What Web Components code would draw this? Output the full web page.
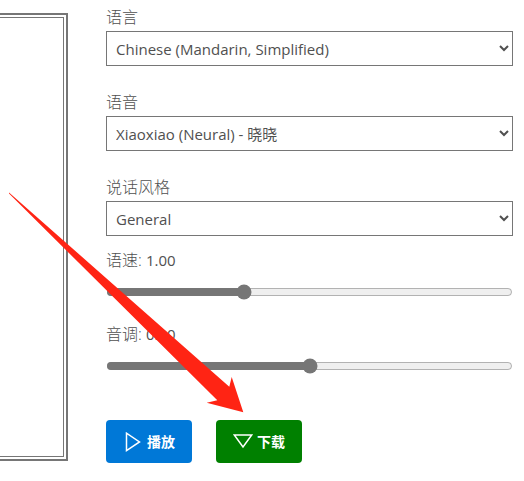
<!DOCTYPE html>
<html lang="zh-CN">
<head>
<meta charset="utf-8">
<title>语音</title>
<style>
    body {
        margin: 0;
        background: #fff;
        color: #505050;
        font-family: "Open Sans", "Noto Sans CJK SC", sans-serif;
        font-size: 16px;
        line-height: 24px;
    }
</style>
</head>
<body>
<speech-page>
    <text-editor slot="editor"></text-editor>
    <select-field label="语言" options="Chinese (Mandarin, Simplified)"></select-field>
    <select-field label="语音" options="Xiaoxiao (Neural) - 晓晓"></select-field>
    <select-field label="说话风格" options="General"></select-field>
    <range-field label="语速" min="0" max="3" value="1"></range-field>
    <range-field label="音调" min="-1" max="1" value="0"></range-field>
    <action-button slot="actions">
        <svg slot="icon" width="20" height="20" viewBox="0 0 20 20" fill="none" stroke="currentColor" stroke-width="1.5"><path d="M3.5 1.2v17.4l13-8.7z"/></svg>
        播放
    </action-button>
    <action-button slot="actions" kind="download">
        <svg slot="icon" width="20" height="20" viewBox="0 0 20 20" fill="none" stroke="currentColor" stroke-width="1.5"><path d="M1.3 3h17.4L10 15z"/></svg>
        下载
    </action-button>
    <pointer-arrow slot="overlay"></pointer-arrow>
</speech-page>

<template id="speech_page_tpl">
    <style>
        :host {
            display: grid;
            grid-template-columns: 68px minmax(0, 1fr);
            column-gap: 38px;
            padding: 5px 11px 0 0;
            position: relative;
        }
        .actions {
            display: flex;
            gap: 24px;
            margin-top: 46px;
        }
    </style>
    <slot name="editor"></slot>
    <div>
        <slot></slot>
        <div class="actions"><slot name="actions"></slot></div>
    </div>
    <slot name="overlay"></slot>
</template>

<template id="text_editor_tpl">
    <style>
        :host {
            display: flex;
            box-sizing: border-box;
            margin: 8px 0 2px;
            padding: 2px 2px 2px 0;
            border: 2px solid #767676;
            border-left: 0;
        }
        textarea {
            flex: 1;
            min-width: 0;
            box-sizing: border-box;
            margin: 0;
            border: 1px solid #767676;
            border-left: 0;
            resize: none;
            outline: none;
            font: inherit;
            color: inherit;
        }
    </style>
    <textarea aria-label="文本"></textarea>
</template>

<template id="select_field_tpl">
    <style>
        :host {
            display: block;
            margin-bottom: 24px;
        }
        :host(:nth-of-type(3)) {
            margin-bottom: 12px;
        }
        label {
            display: block;
            margin-bottom: 2px;
            font-weight: 300;
        }
        select {
            display: block;
            box-sizing: border-box;
            width: 100%;
            height: 35px;
            margin: 0;
            padding: 0 5px;
            border: 1px solid #767676;
            border-radius: 0;
            background: #fff;
            color: inherit;
            font: inherit;
            font-size: 15px;
        }
    </style>
    <label for="control"></label>
    <select id="control"></select>
</template>

<template id="range_field_tpl">
    <style>
        :host {
            display: block;
        }
        :host(:not(:last-of-type)) {
            margin-bottom: 22px;
        }
        label {
            display: block;
            margin-bottom: 12px;
            font-weight: 300;
        }
        output {
            font-size: 15px;
            font-weight: 400;
        }
        input {
            display: block;
            width: 100%;
            height: 16px;
            margin: 0;
            accent-color: #767676;
        }
    </style>
    <label for="control"><span></span>: <output></output></label>
    <input id="control" type="range" step="0.01">
</template>

<template id="action_button_tpl">
    <style>
        :host {
            display: block;
        }
        button {
            display: flex;
            align-items: center;
            gap: 4px;
            height: 43px;
            padding: 0 17px;
            border: 0;
            border-radius: 4px;
            background: #0078d7;
            color: #fff;
            font: inherit;
            font-size: 14px;
            font-weight: 700;
        }
        :host([kind="download"]) button {
            background: #008000;
        }
    </style>
    <button type="button"><slot name="icon"></slot><span><slot></slot></span></button>
</template>

<template id="pointer_arrow_tpl">
    <style>
        :host {
            position: absolute;
            top: 0;
            left: 0;
            pointer-events: none;
        }
        svg {
            display: block;
        }
    </style>
    <svg width="244" height="413" viewBox="0 0 244 413" aria-hidden="true">
        <path fill="#ff2414" d="M9 192.5L229.3 386.7L231.7 377L243.3 412.3L206.7 402.7L217.3 400.3L9 193.5z"/>
    </svg>
</template>

<script>
    class TemplateElement extends HTMLElement {
        constructor() {
            super();
            const tpl = document.getElementById(this.localName.replace('-', '_') + '_tpl');
            this.attachShadow({mode: 'open'});
            this.shadowRoot.appendChild(tpl.content.cloneNode(true));
        }
    }

    class SelectFieldElement extends TemplateElement {
        connectedCallback() {
            this.shadowRoot.querySelector('label').textContent = this.getAttribute('label');
            const select = this.shadowRoot.querySelector('select');
            select.replaceChildren();
            for (const name of this.getAttribute('options').split('|')) {
                select.add(new Option(name));
            }
        }
    }

    class RangeFieldElement extends TemplateElement {
        constructor() {
            super();
            this.input = this.shadowRoot.querySelector('input');
            this.update = this.update.bind(this);
        }
        update() {
            this.shadowRoot.querySelector('output').textContent = Number(this.input.value).toFixed(2);
        }
        connectedCallback() {
            this.shadowRoot.querySelector('span').textContent = this.getAttribute('label');
            this.input.min = this.getAttribute('min');
            this.input.max = this.getAttribute('max');
            this.input.value = this.getAttribute('value');
            this.input.addEventListener('input', this.update);
            this.update();
        }
        disconnectedCallback() {
            this.input.removeEventListener('input', this.update);
        }
    }

    customElements.define('speech-page', class extends TemplateElement {});
    customElements.define('text-editor', class extends TemplateElement {});
    customElements.define('select-field', SelectFieldElement);
    customElements.define('range-field', RangeFieldElement);
    customElements.define('action-button', class extends TemplateElement {});
    customElements.define('pointer-arrow', class extends TemplateElement {});
</script>
</body>
</html>
